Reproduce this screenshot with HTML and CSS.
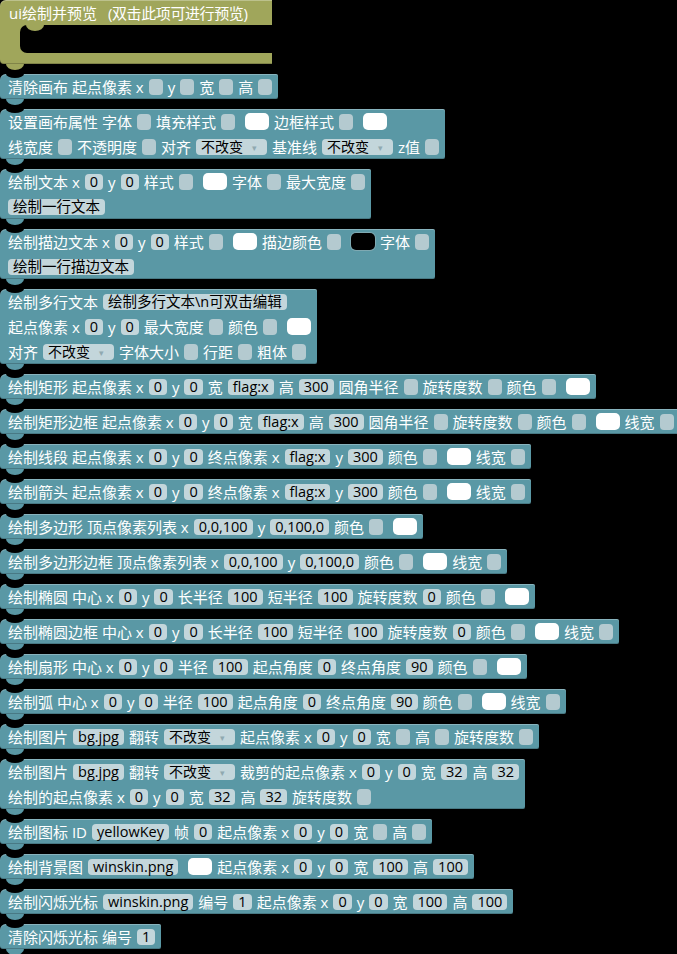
FILE: index.html
```html
<!DOCTYPE html>
<html lang="zh">
<head>
<meta charset="utf-8">
<title>ui绘制</title>
<link rel="stylesheet" href="styles.css">
</head>
<body>
<div class="ws">

  <div class="hat">
    <div class="hat-head"><span>ui绘制并预览</span><span class="hint">(双击此项可进行预览)</span></div>
    <div class="hat-mid"><div class="hat-hole"></div></div>
    <div class="hat-foot"></div>
  </div>

  <div class="blk">
    <div class="row"><span>清除画布 起点像素 x</span><i class="s"></i><span>y</span><i class="s"></i><span>宽</span><i class="s"></i><span>高</span><i class="s"></i></div>
  </div>

  <div class="blk">
    <div class="row"><span>设置画布属性 字体</span><i class="s"></i><span>填充样式</span><i class="s"></i><i class="c"></i><span>边框样式</span><i class="s"></i><i class="c"></i></div>
    <div class="row"><span>线宽度</span><i class="s"></i><span>不透明度</span><i class="s"></i><span>对齐</span><span class="dd">不改变<b>▾</b></span><span>基准线</span><span class="dd">不改变<b>▾</b></span><span>z值</span><i class="s"></i></div>
  </div>

  <div class="blk">
    <div class="row"><span>绘制文本 x</span><span class="f">0</span><span>y</span><span class="f">0</span><span>样式</span><i class="s"></i><i class="c"></i><span>字体</span><i class="s"></i><span>最大宽度</span><i class="s"></i></div>
    <div class="row"><span class="f">绘制一行文本</span></div>
  </div>

  <div class="blk">
    <div class="row"><span>绘制描边文本 x</span><span class="f">0</span><span>y</span><span class="f">0</span><span>样式</span><i class="s"></i><i class="c"></i><span>描边颜色</span><i class="s"></i><i class="c k"></i><span>字体</span><i class="s"></i></div>
    <div class="row"><span class="f">绘制一行描边文本</span></div>
  </div>

  <div class="blk">
    <div class="row"><span>绘制多行文本</span><span class="f">绘制多行文本\n可双击编辑</span></div>
    <div class="row"><span>起点像素 x</span><span class="f">0</span><span>y</span><span class="f">0</span><span>最大宽度</span><i class="s"></i><span>颜色</span><i class="s"></i><i class="c"></i></div>
    <div class="row"><span>对齐</span><span class="dd">不改变<b>▾</b></span><span>字体大小</span><i class="s"></i><span>行距</span><i class="s"></i><span>粗体</span><i class="s"></i></div>
  </div>

  <div class="blk">
    <div class="row"><span>绘制矩形 起点像素 x</span><span class="f">0</span><span>y</span><span class="f">0</span><span>宽</span><span class="f">flag:x</span><span>高</span><span class="f">300</span><span>圆角半径</span><i class="s"></i><span>旋转度数</span><i class="s"></i><span>颜色</span><i class="s"></i><i class="c"></i></div>
  </div>

  <div class="blk">
    <div class="row"><span>绘制矩形边框 起点像素 x</span><span class="f">0</span><span>y</span><span class="f">0</span><span>宽</span><span class="f">flag:x</span><span>高</span><span class="f">300</span><span>圆角半径</span><i class="s"></i><span>旋转度数</span><i class="s"></i><span>颜色</span><i class="s"></i><i class="c"></i><span>线宽</span><i class="s"></i></div>
  </div>

  <div class="blk">
    <div class="row"><span>绘制线段 起点像素 x</span><span class="f">0</span><span>y</span><span class="f">0</span><span>终点像素 x</span><span class="f">flag:x</span><span>y</span><span class="f">300</span><span>颜色</span><i class="s"></i><i class="c"></i><span>线宽</span><i class="s"></i></div>
  </div>

  <div class="blk">
    <div class="row"><span>绘制箭头 起点像素 x</span><span class="f">0</span><span>y</span><span class="f">0</span><span>终点像素 x</span><span class="f">flag:x</span><span>y</span><span class="f">300</span><span>颜色</span><i class="s"></i><i class="c"></i><span>线宽</span><i class="s"></i></div>
  </div>

  <div class="blk">
    <div class="row"><span>绘制多边形 顶点像素列表 x</span><span class="f">0,0,100</span><span>y</span><span class="f">0,100,0</span><span>颜色</span><i class="s"></i><i class="c"></i></div>
  </div>

  <div class="blk">
    <div class="row"><span>绘制多边形边框 顶点像素列表 x</span><span class="f">0,0,100</span><span>y</span><span class="f">0,100,0</span><span>颜色</span><i class="s"></i><i class="c"></i><span>线宽</span><i class="s"></i></div>
  </div>

  <div class="blk">
    <div class="row"><span>绘制椭圆 中心 x</span><span class="f">0</span><span>y</span><span class="f">0</span><span>长半径</span><span class="f">100</span><span>短半径</span><span class="f">100</span><span>旋转度数</span><span class="f">0</span><span>颜色</span><i class="s"></i><i class="c"></i></div>
  </div>

  <div class="blk">
    <div class="row"><span>绘制椭圆边框 中心 x</span><span class="f">0</span><span>y</span><span class="f">0</span><span>长半径</span><span class="f">100</span><span>短半径</span><span class="f">100</span><span>旋转度数</span><span class="f">0</span><span>颜色</span><i class="s"></i><i class="c"></i><span>线宽</span><i class="s"></i></div>
  </div>

  <div class="blk">
    <div class="row"><span>绘制扇形 中心 x</span><span class="f">0</span><span>y</span><span class="f">0</span><span>半径</span><span class="f">100</span><span>起点角度</span><span class="f">0</span><span>终点角度</span><span class="f">90</span><span>颜色</span><i class="s"></i><i class="c"></i></div>
  </div>

  <div class="blk">
    <div class="row"><span>绘制弧 中心 x</span><span class="f">0</span><span>y</span><span class="f">0</span><span>半径</span><span class="f">100</span><span>起点角度</span><span class="f">0</span><span>终点角度</span><span class="f">90</span><span>颜色</span><i class="s"></i><i class="c"></i><span>线宽</span><i class="s"></i></div>
  </div>

  <div class="blk">
    <div class="row"><span>绘制图片</span><span class="f">bg.jpg</span><span>翻转</span><span class="dd">不改变<b>▾</b></span><span>起点像素 x</span><span class="f">0</span><span>y</span><span class="f">0</span><span>宽</span><i class="s"></i><span>高</span><i class="s"></i><span>旋转度数</span><i class="s"></i></div>
  </div>

  <div class="blk">
    <div class="row"><span>绘制图片</span><span class="f">bg.jpg</span><span>翻转</span><span class="dd">不改变<b>▾</b></span><span>裁剪的起点像素 x</span><span class="f">0</span><span>y</span><span class="f">0</span><span>宽</span><span class="f">32</span><span>高</span><span class="f">32</span></div>
    <div class="row"><span>绘制的起点像素 x</span><span class="f">0</span><span>y</span><span class="f">0</span><span>宽</span><span class="f">32</span><span>高</span><span class="f">32</span><span>旋转度数</span><i class="s"></i></div>
  </div>

  <div class="blk">
    <div class="row"><span>绘制图标 ID</span><span class="f">yellowKey</span><span>帧</span><span class="f">0</span><span>起点像素 x</span><span class="f">0</span><span>y</span><span class="f">0</span><span>宽</span><i class="s"></i><span>高</span><i class="s"></i></div>
  </div>

  <div class="blk">
    <div class="row"><span>绘制背景图</span><span class="f">winskin.png</span><i class="c"></i><span>起点像素 x</span><span class="f">0</span><span>y</span><span class="f">0</span><span>宽</span><span class="f">100</span><span>高</span><span class="f">100</span></div>
  </div>

  <div class="blk">
    <div class="row"><span>绘制闪烁光标</span><span class="f">winskin.png</span><span>编号</span><span class="f">1</span><span>起点像素 x</span><span class="f">0</span><span>y</span><span class="f">0</span><span>宽</span><span class="f">100</span><span>高</span><span class="f">100</span></div>
  </div>

  <div class="blk">
    <div class="row"><span>清除闪烁光标 编号</span><span class="f">1</span></div>
  </div>

</div>
</body>
</html>
```

FILE: styles.css
```css
html, body {
  margin: 0;
  padding: 0;
  background: #000;
  overflow: hidden;
}

body {
  width: 677px;
  height: 954px;
  font-family: "Open Sans", "Noto Sans CJK SC", sans-serif;
  font-size: 15px;
  color: #fff;
}

.ws {
  display: flex;
  flex-direction: column;
  align-items: flex-start;
  gap: 10px;
}

/* ---------- hat / C-shaped block ---------- */
.hat {
  position: relative;
  display: flex;
  flex-direction: column;
  width: 272px;
}

.hat-head {
  position: relative;
  height: 25px;
  background: #a0a65b;
  border-radius: 6px 0 0 0;
  box-shadow: inset 0 1px 0 rgba(255, 255, 255, 0.3);
  display: flex;
  align-items: center;
  padding-left: 9px;
  line-height: 16px;
  white-space: nowrap;
}

.hat-head .hint {
  margin-left: 11px;
  letter-spacing: -0.4px;
}

.hat-head::after {
  content: "";
  position: absolute;
  left: 26px;
  bottom: -6px;
  width: 18px;
  height: 6px;
  background: #a0a65b;
  border-radius: 0 0 9px 9px / 0 0 6px 6px;
}

.hat-mid {
  display: flex;
  height: 28px;
  background: #a0a65b;
}

.hat-hole {
  flex: 1;
  margin-left: 20px;
  background: #000;
  border-radius: 7px 0 0 7px;
}

.hat-foot {
  position: relative;
  height: 11px;
  background: #a0a65b;
  border-radius: 0 0 0 4px;
  box-shadow: inset 0 -1px 0 rgba(0, 0, 0, 0.2);
}

.hat-foot::after {
  content: "";
  position: absolute;
  left: 6px;
  bottom: -6px;
  width: 18px;
  height: 6px;
  background: #a0a65b;
  border-radius: 0 0 9px 9px / 0 0 6px 6px;
}

/* ---------- statement blocks ---------- */
.blk {
  position: relative;
  display: flex;
  flex-direction: column;
  padding: 0 6px 0 8px;
  background: #5a98a5;
  border-radius: 6px 2px 2px 3px;
  box-shadow: inset 0 1px 0 rgba(255, 255, 255, 0.28), inset 0 -1px 0 rgba(0, 0, 0, 0.2);
}

.blk::before {
  content: "";
  position: absolute;
  left: 6px;
  top: 0;
  width: 18px;
  height: 4px;
  background: #000;
  border-radius: 0 0 9px 9px / 0 0 4px 4px;
}

.blk::after {
  content: "";
  position: absolute;
  left: 6px;
  bottom: -6px;
  width: 18px;
  height: 6px;
  background: #5a98a5;
  border-radius: 0 0 9px 9px / 0 0 6px 6px;
}

.row {
  display: flex;
  align-items: center;
  gap: 5px;
  height: 25px;
  line-height: 16px;
  white-space: nowrap;
}

.row > span {
  display: block;
}

/* editable text field */
.f {
  height: 16px;
  padding: 0 5px;
  background: #c3d6db;
  border-radius: 4px;
  color: #000;
  font-size: 14.5px;
  line-height: 16px;
}

/* empty value slot */
.s {
  display: block;
  width: 14px;
  height: 16px;
  background: #b4cad0;
  border-radius: 4px;
}

/* colour swatch */
.c {
  display: block;
  width: 24px;
  height: 17px;
  margin-left: 5px;
  background: #fff;
  border-radius: 5px;
}

.c.k {
  background: #000;
  box-shadow: 0 0 0 1px #7fa9b2;
}

/* dropdown */
.dd {
  height: 16px;
  padding: 0 10px 0 5px;
  background: #c3d6db;
  border-radius: 4px;
  color: #000;
  font-size: 14px;
  line-height: 16px;
}

.dd b {
  font-weight: normal;
  font-size: 9px;
  color: #8fa9b0;
  margin-left: 9px;
  vertical-align: 1px;
}
```
